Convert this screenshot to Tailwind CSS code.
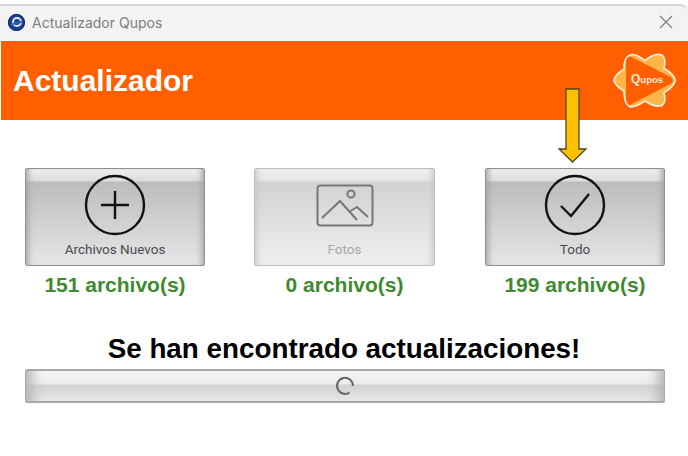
<!DOCTYPE html>
<html lang="en">

<head>
    <meta charset="utf-8" />
    <title>Actualizador Qupos</title>
    <script src="https://cdn.jsdelivr.net/npm/@tailwindcss/browser@4"></script>
</head>

<body class="bg-white">
    <div class="relative w-[688px] h-[456px] overflow-hidden bg-white font-['Liberation_Sans',sans-serif]">
        <!-- Title bar -->
        <div class="mt-[4px] h-[37px] flex items-center justify-between pl-[7px] pr-[15px] pb-[3px] bg-[#f3f3f3] border-t-2 border-[#d4d4d4] rounded-tr-lg">
            <div class="flex items-center gap-[6px]">
                <svg width="19" height="19" viewBox="0 0 19 19">
                    <circle cx="9.5" cy="9.5" r="8.5" fill="#1b3f8f" />
                    <circle cx="9.5" cy="9.5" r="8" fill="none" stroke="#10265f" stroke-width="1" />
                    <circle cx="10" cy="9" r="4" fill="none" stroke="#dfe9f7" stroke-width="2" />
                    <path d="M3 11 L16 7.6 L16 9.6 L4 12.6 Z" fill="#2a62c0" />
                </svg>
                <span class="text-[14px] text-[#7d7d7d] font-['Inter',sans-serif]">Actualizador Qupos</span>
            </div>
            <svg width="14" height="14" viewBox="0 0 14 14" stroke="#7f7f7f" stroke-width="1.3">
                <path d="M1 1 L13 13 M13 1 L1 13" />
            </svg>
        </div>

        <!-- Orange header -->
        <div class="ml-px h-[79px] bg-[#ff5f00] flex items-center justify-between pl-[12px]">
            <h1 class="text-[30px] font-bold text-white">Actualizador</h1>
            <div class="relative w-[88px] h-[80px]">
                <svg width="88" height="80" viewBox="0 0 264 240">
                    <path d="M135 58 Q165 35 185 42 Q200 50 192 82 Q222 100 226 118 Q222 138 192 155 Q200 185 185 194 Q165 200 135 180 Q105 200 90 197 Q72 190 72 150 Q45 135 42 118 Q45 100 72 85 Q70 50 90 42 Q105 35 135 58 Z" fill="#ffb547" />
                    <path d="M78 58 Q78 42 94 48 L212 108 Q226 118 212 128 L94 190 Q78 196 78 180 Z" fill="#ff5f00" />
                    <path d="M135 58 Q165 35 185 42 Q200 50 192 82 Q222 100 226 118 Q222 138 192 155 Q200 185 185 194 Q165 200 135 180 Q105 200 90 197 Q72 190 72 150 Q45 135 42 118 Q45 100 72 85 Q70 50 90 42 Q105 35 135 58 Z" fill="none" stroke="#ffeedd" stroke-width="5" />
                </svg>
                <span class="absolute left-[31px] top-[32px] text-[9.5px] leading-[12px] font-bold text-[#ffeadd]"><span class="text-[12px]">Q</span>upos</span>
            </div>
        </div>

        <!-- Options -->
        <div class="mt-[48px] pl-[25px] flex">
            <div class="w-[180px] flex flex-col items-center">
                <div class="w-full h-[98px] flex flex-col items-center border border-[#8f8f8f] rounded-[2px] bg-[linear-gradient(180deg,#efefef_0,#dcdcdc_12px,#bcbcbc_13px,#e6e6e6_100%)] shadow-[inset_7px_0_6px_-5px_#a0a0a0,inset_-7px_0_6px_-5px_#a0a0a0]">
                    <svg class="mt-[5px]" width="62" height="62" viewBox="0 0 62 62" fill="none" stroke="#111" stroke-width="2.4">
                        <circle cx="31" cy="31" r="29" />
                        <path d="M31 17 V45 M17 31 H45" />
                    </svg>
                    <span class="mt-[5px] text-[13.5px] leading-[16px] text-[#4a4a52] font-['Roboto',sans-serif]">Archivos Nuevos</span>
                </div>
                <span class="mt-[7px] text-[21px] leading-[24px] font-bold text-[#3f8a2e]">151 archivo(s)</span>
            </div>

            <div class="ml-[49px] w-[181px] flex flex-col items-center">
                <div class="w-full h-[98px] flex flex-col items-center border border-[#bdbdbd] rounded-[2px] bg-[linear-gradient(180deg,#f0f0f0_0,#e4e4e4_12px,#d2d2d2_13px,#efefef_100%)] shadow-[inset_7px_0_6px_-5px_#c8c8c8,inset_-7px_0_6px_-5px_#c8c8c8]">
                    <svg class="mt-[15px]" width="58" height="43" viewBox="0 0 58 43" fill="none" stroke="#777" stroke-width="2">
                        <rect x="1.5" y="1.5" width="55" height="40" rx="3" />
                        <circle cx="35" cy="10" r="3.6" />
                        <path d="M6 34 L24 17 L41 36 M33 28 L41 23 L52 33" />
                    </svg>
                    <span class="mt-[14px] text-[13.5px] leading-[16px] text-[#a8a8a8] font-['Roboto',sans-serif]">Fotos</span>
                </div>
                <span class="mt-[7px] text-[21px] leading-[24px] font-bold text-[#3f8a2e]">0 archivo(s)</span>
            </div>

            <div class="ml-[50px] w-[180px] flex flex-col items-center">
                <div class="w-full h-[98px] flex flex-col items-center border border-[#8f8f8f] rounded-[2px] bg-[linear-gradient(180deg,#efefef_0,#dcdcdc_12px,#bcbcbc_13px,#e6e6e6_100%)] shadow-[inset_7px_0_6px_-5px_#a0a0a0,inset_-7px_0_6px_-5px_#a0a0a0]">
                    <svg class="mt-[5px]" width="62" height="62" viewBox="0 0 62 62" fill="none" stroke="#111" stroke-width="2.4">
                        <circle cx="31" cy="31" r="29" />
                        <path d="M17 32 L27 42 L45 20" />
                    </svg>
                    <span class="mt-[5px] text-[13.5px] leading-[16px] text-[#4a4a52] font-['Roboto',sans-serif]">Todo</span>
                </div>
                <span class="mt-[7px] text-[21px] leading-[24px] font-bold text-[#3f8a2e]">199 archivo(s)</span>
            </div>
        </div>

        <!-- Status -->
        <h2 class="mt-[37px] text-center text-[27.8px] leading-[30px] font-bold text-black">Se han encontrado actualizaciones!</h2>
        <div class="mt-[5px] ml-[25px] mr-[23px] h-[34px] flex items-center justify-center border-y-2 border-x border-[#a8a8a8] rounded-[2px] bg-[linear-gradient(180deg,#f4f4f4_0,#ececec_13px,#d2d2d2_14px,#e6e6e6_100%)] shadow-[inset_18px_0_12px_-12px_#b4b4b4,inset_-18px_0_12px_-12px_#b4b4b4]">
            <svg width="20" height="20" viewBox="0 0 20 20" fill="none" stroke="#666" stroke-width="2">
                <path d="M14.5 16.5 A8 8 0 1 1 18 10" />
            </svg>
        </div>

        <!-- Annotation arrow -->
        <svg class="absolute left-[557px] top-[87px]" width="32" height="76" viewBox="0 0 32 76">
            <path d="M9 2 H22 V62 H29 L15.5 75 L2 62 H9 Z" fill="#ffc000" stroke="#4b4a20" stroke-width="1.3" />
        </svg>
    </div>
</body>

</html>
